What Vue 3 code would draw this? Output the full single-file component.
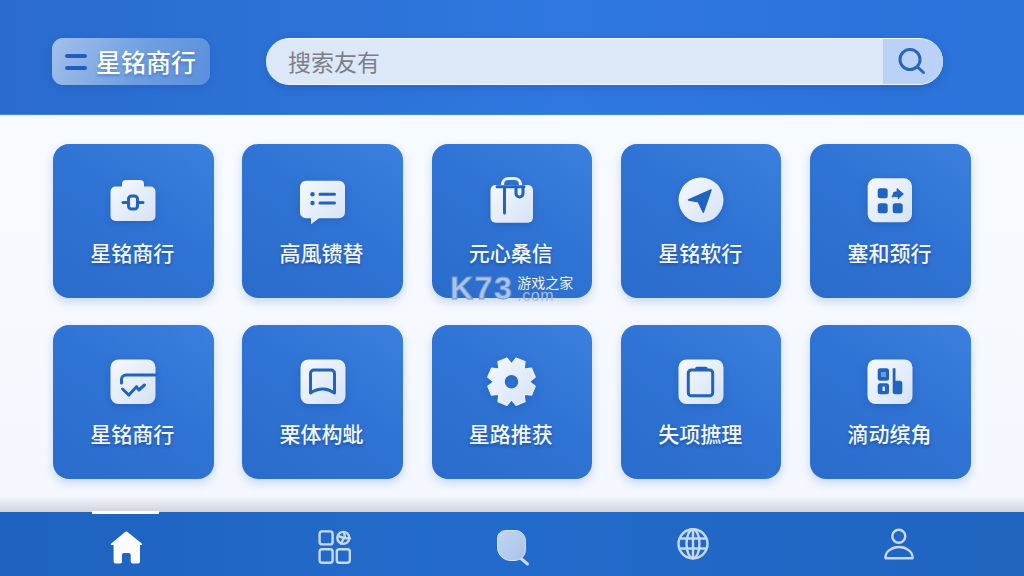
<template>
  <div class="app">
    <svg class="defs" width="0" height="0">
      <defs>
        <linearGradient id="tile" x1="0" y1="0" x2="1" y2="1">
          <stop offset="0" stop-color="#f6f9fe" />
          <stop offset="1" stop-color="#d5e2f5" />
        </linearGradient>
        <linearGradient id="blob" x1="0" y1="0" x2="1" y2="1">
          <stop offset="0" stop-color="#c3d5f0" />
          <stop offset="1" stop-color="#a9c3e8" />
        </linearGradient>
      </defs>
    </svg>

    <header class="top">
      <div class="brand">
        <span class="menu"><i></i><i></i></span>
        <span class="brand-name">星铭商行</span>
      </div>
      <div class="search">
        <span class="search-text">搜索友有</span>
        <button class="search-btn">
          <svg width="32" height="32" viewBox="0 0 32 32" fill="none" stroke="#2a66bd" stroke-width="3" stroke-linecap="round">
            <circle cx="15" cy="13.500" r="10" />
            <path d="M22.500 21l6 5.500" />
          </svg>
        </button>
      </div>
    </header>

    <main class="content">
      <div class="grid">
        <div class="card" v-for="item in cards" :key="item.id">
          <svg class="card-icon" width="48" height="48" viewBox="0 0 48 48" v-html="item.icon"></svg>
          <span class="card-label">{{ item.label }}</span>
        </div>
      </div>
      <!-- watermark -->
      <div class="mark">
        <span class="mark-logo">K73</span>
        <span class="mark-side">
          <span class="mark-cn">游戏之家</span>
          <span class="mark-com">.com</span>
        </span>
      </div>
    </main>

    <nav class="bottom">
      <div class="tab" v-for="tab in tabs" :key="tab.id">
        <span v-if="tab.id === 'home'" class="tab-line"></span>
        <svg width="36" height="40" viewBox="0 0 36 40" fill="none" v-html="tab.icon"></svg>
      </div>
    </nav>
  </div>
</template>

<script setup>
const BLUE = '#2063c0'
const line = `fill="none" stroke="${BLUE}" stroke-width="3" stroke-linecap="round" stroke-linejoin="round"`
const square = '<rect x="1.5" y="1.5" width="45" height="44.5" rx="8" fill="url(#tile)"/>'

// cog with 8 teeth and a hole in the middle
const gearPath = () => {
  const cx = 23.5
  const cy = 23.7
  let d = ''
  for (let i = 0; i < 8; i++) {
    const a = (i * Math.PI) / 4 + Math.PI / 8
    const pts = [
      [18.5, -0.36], [24, -0.2], [24, 0.2], [18.5, 0.36]
    ]
    pts.forEach(([r, o], n) => {
      const x = (cx + r * Math.cos(a + o)).toFixed(1)
      const y = (cy + r * Math.sin(a + o)).toFixed(1)
      d += (i === 0 && n === 0 ? 'M' : 'L') + x + ' ' + y
    })
  }
  d += 'Z M31 23.7a7.5 7.5 0 1 0 -15 0a7.5 7.5 0 1 0 15 0Z'
  return d
}

const cards = [
  {
    id: 1,
    label: '星铭商行',
    icon: `<path d="M6.5 9.5H13V7a4 4 0 0 1 4-4h14a4 4 0 0 1 4 4v2.5h6.500a5 5 0 0 1 5 5V39a5 5 0 0 1-5 5h-35a5 5 0 0 1-5-5V14.500a5 5 0 0 1 5-5Z" fill="url(#tile)"/>
      <path d="M14 25.500h5M29 25.500h5" ${line}/>
      <rect x="19.500" y="19" width="9" height="13" rx="3" ${line}/>
      <path d="M24 21v8" stroke="#eef3fb" stroke-width="2.400"/>`
  },
  {
    id: 2,
    label: '高風镄替',
    icon: `<path d="M7 3.700h33a6 6 0 0 1 6 6V35.300a6 6 0 0 1-6 6H20L12 47.300V41.300H7a6 6 0 0 1-6-6V9.700a6 6 0 0 1 6-6Z" fill="url(#tile)"/>
      <circle cx="13.500" cy="17.300" r="2.200" fill="${BLUE}"/><circle cx="13.500" cy="26" r="2.200" fill="${BLUE}"/>
      <path d="M21 17.300h14.500M21 26h14.500" ${line}/>`
  },
  {
    id: 3,
    label: '元心桑信',
    icon: `<path d="M14.500 10V7a6 6 0 0 1 6-5.500h6a6 6 0 0 1 6 5.500v3" fill="none" stroke="#e8effa" stroke-width="3.200"/>
      <rect x="2.500" y="8" width="42.500" height="37.700" rx="5" fill="url(#tile)"/>
      <path d="M9 9.700h27M16.500 9.700V36" ${line}/>
      <path d="M28 10v6.500a3.500 3.500 0 0 0 7 0V10" ${line}/>`
  },
  {
    id: 4,
    label: '星铭软行',
    icon: `<circle cx="24" cy="23" r="22.500" fill="url(#tile)"/>
      <path d="M34 13L11.500 23L21.300 24.700L26.300 35.300Z" fill="${BLUE}" stroke="${BLUE}" stroke-width="1.500" stroke-linejoin="round"/>`
  },
  {
    id: 5,
    label: '塞和颈行',
    icon: `<rect x="1.700" y="1.300" width="44.300" height="44" rx="8" fill="url(#tile)"/>
      <rect x="11.700" y="11.300" width="10" height="10" rx="2.500" fill="${BLUE}"/>
      <rect x="11.700" y="26.300" width="10" height="10" rx="2.500" fill="${BLUE}"/>
      <rect x="26.700" y="26.300" width="10" height="10" rx="2.500" fill="${BLUE}"/>
      <path d="M26 20l2-5h3v-3.500l6.500 5.500l-5.500 5v-2.500Z" fill="${BLUE}" stroke="${BLUE}" stroke-width=".8" stroke-linejoin="round"/>`
  },
  {
    id: 6,
    label: '星铭商行',
    icon: `${square}
      <path d="M46 17H17a4.500 4.500 0 0 0-4.500 4.500V25" ${line}/>
      <path d="M13.500 31l6.300 6l7.700-8.300l2.300 3.300l5.700-5" ${line}/>`
  },
  {
    id: 7,
    label: '栗体构蚍',
    icon: `${square}
      <path d="M11.500 35V15.500a3.500 3.500 0 0 1 3.500-3.500h17a3.500 3.500 0 0 1 3.500 3.500V35c-4-2.800-7.500-4-11.500-4s-8.500 1.200-12.500 4Z" ${line}/>`
  },
  {
    id: 8,
    label: '星路推获',
    icon: `<path d="${gearPath()}" fill="url(#tile)" fill-rule="evenodd" stroke="#e6eefa" stroke-width="1.500" stroke-linejoin="round"/>`
  },
  {
    id: 9,
    label: '失项摭理',
    icon: `${square}
      <rect x="11.300" y="12" width="24.400" height="25.700" rx="3" ${line}/>
      <path d="M19.700 10.300h9.300" ${line}/>`
  },
  {
    id: 10,
    label: '滴动缤角',
    icon: `${square}
      <rect x="11.700" y="10.300" width="11.300" height="12.400" rx="2.500" fill="${BLUE}"/>
      <rect x="15" y="14" width="5" height="5" fill="#6f9ad6"/>
      <rect x="11.700" y="25.300" width="11.300" height="11" rx="2.500" fill="${BLUE}"/>
      <rect x="16.500" y="28.500" width="2.400" height="4.500" fill="#dfe8f7"/>
      <path d="M26.700 10.300h2.800v12.400h4.300a2.500 2.500 0 0 1 2.500 2.500v8.600a2.500 2.500 0 0 1-2.500 2.500h-4.600a2.500 2.500 0 0 1-2.500-2.500Z" fill="${BLUE}"/>`
  }
]

const PALE = '#c7d8f3'
const navLine = `stroke="${PALE}" stroke-width="2.400" stroke-linecap="round" stroke-linejoin="round"`

const tabs = [
  {
    id: 'home',
    icon: `<path fill-rule="evenodd" d="M16.500 6.400a2.500 2.500 0 0 1 3.600 0L33.800 17.500c.8.800.3 1.600-.8 1.600H32V35.600a2 2 0 0 1-2 2h-5.500a1.800 1.800 0 0 1-1.800-1.800V29a2 2 0 0 0-2-2h-4.700a2 2 0 0 0-2 2v6.800a1.800 1.800 0 0 1-1.800 1.800H7.600a2 2 0 0 1-2-2V19.100H4c-1.200 0-1.600-.9-.8-1.600Z" fill="#fafcff"/>`
  },
  {
    id: 'apps',
    icon: `<rect x="3.600" y="5.400" width="13" height="13" rx="2.500" ${navLine}/>
      <rect x="3.600" y="23.300" width="13" height="13.500" rx="2.500" ${navLine}/>
      <rect x="20.800" y="23.300" width="13" height="13.500" rx="2.500" ${navLine}/>
      <circle cx="27.300" cy="11.900" r="6" ${navLine}/>
      <path d="M22 10l6 2l-3 5.500M28 6l1 6l5 .5" ${navLine}/>`
  },
  {
    id: 'search',
    icon: `<path d="M27 32.500l6.500 5.500" stroke="${PALE}" stroke-width="3" stroke-linecap="round"/>
      <path d="M12 4.500h9c6 0 10.500 4.500 10.500 11v8c0 6.500-5 11-11.500 11h-3C9.500 34.500 3.500 29 3.500 21V12c0-4.500 4-7.500 8.500-7.500Z" fill="url(#blob)" stroke="#d3e1f6" stroke-width="1"/>`
  },
  {
    id: 'globe',
    icon: `<circle cx="18" cy="17.800" r="14.500" ${navLine}/>
      <ellipse cx="18" cy="17.800" rx="6.500" ry="14.500" ${navLine}/>
      <path d="M18 3.300v29M5 12.500h26M5 22.500h26" ${navLine}/>`
  },
  {
    id: 'user',
    icon: `<circle cx="17.800" cy="10.300" r="6.500" ${navLine}/>
      <path d="M4.500 32.300v-1.300c0-5 6-10 13.500-10s13.500 5 13.500 10v1.300Z" ${navLine}/>`
  }
]
</script>

<style scoped>
.app {
  width: 1024px;
  height: 576px;
  display: flex;
  flex-direction: column;
  overflow: hidden;
  font-family: "Noto Sans CJK SC", "Noto Sans", sans-serif;
  background: #f6f9fe;
}
.defs {
  display: block;
  height: 0;
}

/* ----------------------- header */
.top {
  height: 115px;
  flex: none;
  box-sizing: border-box;
  padding: 38px 0 0 52px;
  display: flex;
  align-items: flex-start;
  gap: 56px;
  background: linear-gradient(90deg, #2a6bcd 0%, #2f78df 55%, #2b72d9 100%);
  border-bottom: 1px solid #3f86e4;
}
.brand {
  width: 158px;
  height: 47px;
  box-sizing: border-box;
  padding-left: 13px;
  display: flex;
  align-items: center;
  gap: 9px;
  border-radius: 11px;
  background: linear-gradient(115deg, #a3c0ea 0%, #6f9fe2 55%, #5b8fdc 100%);
  box-shadow: 0 2px 6px rgba(20, 70, 160, 0.25);
}
.menu {
  width: 22px;
  display: flex;
  flex-direction: column;
  gap: 8px;
}
.menu i {
  display: block;
  height: 4px;
  border-radius: 2px;
  background: #1f5ec0;
}
.brand-name {
  font-size: 25px;
  font-weight: 500;
  line-height: 47px;
  color: #fff;
  text-shadow: 0 2px 3px rgba(20, 60, 130, 0.35);
}
.search {
  width: 677px;
  height: 47px;
  box-sizing: border-box;
  display: flex;
  align-items: stretch;
  padding-left: 22px;
  border-radius: 24px;
  overflow: hidden;
  border-top: 1px solid #f3f7fd;
  border-bottom: 1px solid #eef4fc;
  background: #dce8f8;
  box-shadow: 0 3px 8px rgba(20, 70, 150, 0.3);
}
.search-text {
  flex: 1;
  font-size: 23px;
  line-height: 45px;
  color: #7b7f87;
}
.search-btn {
  width: 60px;
  padding: 0 0 0 12px;
  border: none;
  display: flex;
  align-items: center;
  background: #b9d2f6;
}

/* ----------------------- cards */
.content {
  flex: 1;
  position: relative;
  background: linear-gradient(180deg, #f7fafe 0%, #f4f7fd 96%, #cfd3db 100%);
}
.grid {
  padding: 29px 0 0 53px;
  display: grid;
  grid-template-columns: repeat(5, 160.5px);
  grid-auto-rows: 154px;
  column-gap: 28.8px;
  row-gap: 27px;
}
.card {
  display: flex;
  flex-direction: column;
  align-items: center;
  border-radius: 16px;
  background: linear-gradient(215deg, #3b80de 0%, #2f73d4 45%, #2a6ccb 100%);
  box-shadow: 0 4px 10px rgba(40, 100, 200, 0.22);
}
.card-icon {
  margin-top: 33px;
  overflow: visible;
  filter: drop-shadow(0 2px 3px rgba(15, 55, 125, 0.25));
}
.card-label {
  margin-top: 13px;
  padding-right: 2px;
  font-size: 21px;
  font-weight: 500;
  line-height: 28px;
  color: #f3f7ff;
  text-shadow: 0 2px 3px rgba(10, 40, 100, 0.4);
}

/* ----------------------- watermark */
.mark {
  position: absolute;
  left: 450px;
  top: 160px;
  display: flex;
  gap: 4px;
}
.mark-logo {
  font-family: "Liberation Sans", sans-serif;
  font-weight: 700;
  font-size: 32px;
  line-height: 27px;
  letter-spacing: 1.5px;
  color: #a9c5ec;
  -webkit-text-stroke: 0.8px #7797cf;
}
.mark-side {
  display: flex;
  flex-direction: column;
}
.mark-cn {
  font-size: 14px;
  line-height: 15px;
  color: #f1f1ea;
}
.mark-com {
  font-family: "Liberation Sans", sans-serif;
  font-size: 16px;
  line-height: 12px;
  letter-spacing: 0.6px;
  color: #a6bde2;
}

/* ----------------------- bottom nav */
.bottom {
  height: 64px;
  flex: none;
  display: grid;
  grid-template-columns: 252px 164px 192px 170px 242px;
  background: linear-gradient(90deg, #1f62bf 0%, #236bcb 45%, #2168c6 70%, #2064c0 100%);
}
.tab {
  position: relative;
  display: flex;
  justify-content: center;
  padding-top: 14px;
}
.tab svg {
  overflow: visible;
}
.tab-line {
  position: absolute;
  left: 92px;
  top: -1px;
  width: 67px;
  height: 3px;
  background: #fbfdff;
}
</style>
